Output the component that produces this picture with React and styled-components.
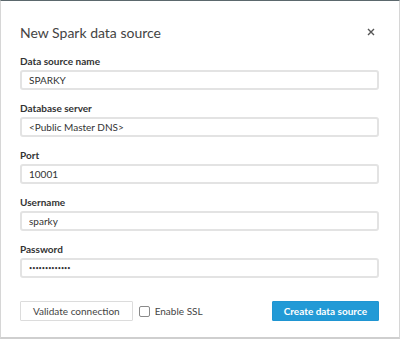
import React from 'react';
import styled, {createGlobalStyle} from 'styled-components';

const GlobalStyle = createGlobalStyle`
    html, body {
        margin: 0;
        padding: 0;
        background: #ffffff;
    }
    * {
        box-sizing: border-box;
    }
`

const fields = [
    {label: 'Data source name', value: 'SPARKY'},
    {label: 'Database server', value: '<Public Master DNS>'},
    {label: 'Port', value: '10001'},
    {label: 'Username', value: 'sparky'},
    {label: 'Password', value: '•••••••••••••', secret: true},
];

const App = () => {
    return(
        <>
        <GlobalStyle />
        <Dialog>
            <Header>
                <Title>New Spark data source</Title>
                <Close aria-label="Close">
                    <svg width="8" height="8" viewBox="0 0 8 8">
                        <path d="M1 1L7 7M7 1L1 7" stroke="#555" strokeWidth="1.4" />
                    </svg>
                </Close>
            </Header>
            <Form>
                {fields.map((f) => (
                    <Field key={f.label}>
                        <Label>{f.label}</Label>
                        <Input readOnly value={f.value} $secret={f.secret} />
                    </Field>
                ))}
            </Form>
            <Footer>
                <Button>Validate connection</Button>
                <Check>
                    <Box />
                    Enable SSL
                </Check>
                <Spacer />
                <Button $primary>Create data source</Button>
            </Footer>
        </Dialog>
        </>
    )
};

const Dialog = styled.div`
    width: 400px;
    height: 339px;
    background: #ffffff;
    border: 1px solid #d6d6d6;
    border-top: 1px solid #5b686d;
    border-bottom: 2px solid #cfcfcf;
    padding: 0 20px 0 19px;
    font-family: "Lato", "Open Sans", sans-serif;
    color: #333;
    display: flex;
    flex-direction: column;
`

const Header = styled.div`
    display: flex;
    align-items: center;
    justify-content: space-between;
    height: 53px;
    padding-top: 10px;
`

const Title = styled.h2`
    margin: 0;
    font-size: 14px;
    font-weight: 400;
    color: #444;
`

const Close = styled.button`
    border: none;
    background: none;
    padding: 0;
    margin-right: 4px;
    margin-top: -2px;
    width: 8px;
    height: 8px;
    display: flex;
`

const Form = styled.div`
    display: flex;
    flex-direction: column;
    gap: 11px;
`

const Field = styled.div`
    display: flex;
    flex-direction: column;
    gap: 2px;
`

const Label = styled.label`
    font-size: 10px;
    font-weight: 700;
    line-height: 14px;
    color: #333;
`

const Input = styled.input`
    height: 20px;
    width: 100%;
    border: 2px solid #e3e3e3;
    border-radius: 3px;
    padding: 0 7px;
    font-family: inherit;
    font-size: ${p => p.$secret ? '5.5px' : '10px'};
    color: #333;
    outline: none;
`

const Footer = styled.div`
    display: flex;
    align-items: center;
    margin-top: 23px;
`

const Button = styled.button`
    height: 20px;
    padding: 0 ${p => p.$primary ? '11px' : '12px'};
    font-family: inherit;
    font-size: 10px;
    border-radius: 1px;
    border: 1px solid ${p => p.$primary ? '#1f95d2' : '#dcdcdc'};
    background: ${p => p.$primary ? '#229ad6' : '#ffffff'};
    color: ${p => p.$primary ? '#ffffff' : '#444'};
    font-weight: ${p => p.$primary ? 700 : 400};
`

const Check = styled.label`
    display: flex;
    align-items: center;
    gap: 5px;
    margin-left: 6px;
    font-size: 10px;
    color: #444;
`

const Box = styled.span`
    width: 11px;
    height: 11px;
    border: 1px solid #8a8a8a;
    border-radius: 2px;
    background: #fff;
`

const Spacer = styled.div`
    flex: 1;
`

export default App;
